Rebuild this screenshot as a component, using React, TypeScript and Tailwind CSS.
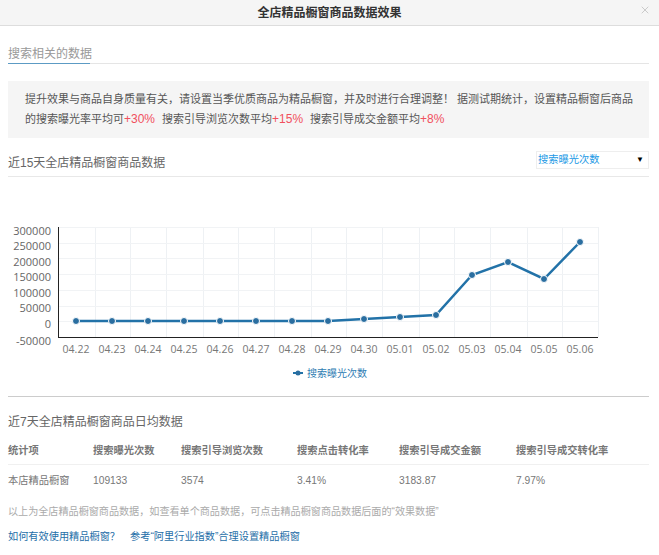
import { X } from "lucide-react";

const cjk = "font-['Liberation_Sans','Noto_Sans_CJK_SC',sans-serif]";

const xLabels = ["04.22", "04.23", "04.24", "04.25", "04.26", "04.27", "04.28", "04.29", "04.30", "05.01", "05.02", "05.03", "05.04", "05.05", "05.06"];
const yLabels = [
  { text: "300000", y: 231 },
  { text: "250000", y: 246 },
  { text: "200000", y: 262 },
  { text: "150000", y: 277 },
  { text: "100000", y: 293 },
  { text: "50000", y: 308 },
  { text: "0", y: 324 },
  { text: "-50000", y: 341 },
];
const points = [321, 321, 321, 321, 321, 321, 321, 321, 319, 317, 315, 275, 262, 279, 242].map((y, i) => ({ x: 76 + i * 36, y: y - 180 }));
const gridX = [95, 130, 166, 203, 238, 274, 311, 346, 382, 419, 454, 490, 527, 562, 598];
const gridY = [227, 243, 258, 274, 290, 306, 321];

const columns = "grid grid-cols-[85px_88px_116px_102px_117px_1fr]";
const headers = ["统计项", "搜索曝光次数", "搜索引导浏览次数", "搜索点击转化率", "搜索引导成交金额", "搜索引导成交转化率"];
const values = ["本店精品橱窗", "109133", "3574", "3.41%", "3183.87", "7.97%"];

function Chart() {
  return (
    <svg width="659" height="210" viewBox="0 0 659 210" className="block font-['Open_Sans',sans-serif]">
      {gridX.map((x) => (
        <line key={x} x1={x + 0.5} y1={47} x2={x + 0.5} y2={157} stroke="#eef1f4" />
      ))}
      {gridY.map((y) => (
        <line key={y} x1={58} y1={y - 179.5} x2={598} y2={y - 179.5} stroke="#f1f3f5" />
      ))}
      <line x1={58.5} y1={47} x2={58.5} y2={157} stroke="#222" />
      <line x1={58} y1={157.5} x2={598} y2={157.5} stroke="#222" />
      {yLabels.map((l) => (
        <text key={l.text} x={51} y={l.y - 180 + 4} textAnchor="end" fontSize="11" fill="#666">
          {l.text}
        </text>
      ))}
      {xLabels.map((l, i) => (
        <text key={l} x={76 + i * 36} y={173} textAnchor="middle" fontSize="10.5" fill="#777">
          {l}
        </text>
      ))}
      <polyline
        points={points.map((p) => `${p.x},${p.y}`).join(" ")}
        fill="none"
        stroke="#2272a8"
        strokeWidth="2.5"
      />
      {points.map((p) => (
        <circle key={p.x} cx={p.x} cy={p.y} r="3.5" fill="#2a6ea0" stroke="#fff" strokeWidth="1" />
      ))}
      <line x1={293} y1={193} x2={303} y2={193} stroke="#2272a8" strokeWidth="2" />
      <circle cx={298} cy={193} r="2.5" fill="#2a6ea0" />
    </svg>
  );
}

export default function App() {
  return (
    <div className={`${cjk} relative w-[659px] h-[555px] overflow-hidden bg-white text-[#666]`}>
      <div className="flex h-[26px] items-center justify-center border-b border-[#ddd] bg-[#f5f5f5] text-xs font-bold text-[#333]">
        全店精品橱窗商品数据效果
      </div>
      <button className="absolute right-[8px] top-[4px] text-[#bbb]">
        <X size={12} strokeWidth={1.5} />
      </button>

      <div className="pl-2 pr-[10px]">
        <div className="mt-[18px] flex border-b border-[#e5e5e5]">
          <span className="-mb-px h-5 w-[82px] whitespace-nowrap border-b border-[#5c9bc4] text-xs leading-[20px] text-[#999]">搜索相关的数据</span>
        </div>

        <div className="mt-[17px] h-[57px] bg-[#f5f5f5] px-[17px] py-2 text-[11px] leading-5 text-[#555]">
          <p className="whitespace-nowrap">提升效果与商品自身质量有关，请设置当季优质商品为精品橱窗，并及时进行合理调整！ 据测试期统计，设置精品橱窗后商品</p>
          <p className="whitespace-nowrap">
            的搜索曝光率平均可<span className="text-xs text-[#f1505e]">+30%</span>
            <span className="ml-[7px]">搜索引导浏览次数平均</span><span className="text-xs text-[#f1505e]">+15%</span>
            <span className="ml-[7px]">搜索引导成交金额平均</span><span className="text-xs text-[#f1505e]">+8%</span>
          </p>
        </div>

        <div className="mt-3 flex h-[27px] items-start justify-between border-b border-[#e8e8e8]">
          <span className="pt-[5px] text-xs text-[#666]">近15天全店精品橱窗商品数据</span>
          <div className="mt-px flex h-[18px] w-[113px] items-center justify-between border border-[#eee] pl-px pr-1 text-[10.25px] text-[#2299e5]">
            搜索曝光次数
            <span className="text-[8px] text-black">▼</span>
          </div>
        </div>
      </div>

      <div className="relative mt-[3px]">
        <Chart />
        <span className="absolute left-[307px] top-[188px] text-[10px] leading-3 text-[#2f7db3]">搜索曝光次数</span>
      </div>

      <div className="pl-2 pr-[10px]">
        <div className="mt-[6px] border-t border-[#ccc] pt-[17px] text-xs leading-4 text-[#666]">近7天全店精品橱窗商品日均数据</div>
        <div className={`${columns} mt-[13px] h-[22px] border-b border-[#f0f0f0] text-[10.25px] font-bold leading-4 text-[#777]`}>
          {headers.map((h) => (
            <span key={h}>{h}</span>
          ))}
        </div>
        <div className={`${columns} mt-2 h-4 text-[10.25px] leading-4 text-[#777]`}>
          {values.map((v) => (
            <span key={v}>{v}</span>
          ))}
        </div>
        <p className="mt-[15px] whitespace-nowrap text-[10.1px] leading-4 text-[#aaa]">以上为全店精品橱窗商品数据，如查看单个商品数据，可点击精品橱窗商品数据后面的“效果数据”</p>
        <p className="mt-[9px] flex gap-[10px] whitespace-nowrap text-[10.2px] leading-4 text-[#1f6fa8]">
          <span>如何有效使用精品橱窗？</span>
          <span>参考“阿里行业指数”合理设置精品橱窗</span>
        </p>
      </div>
    </div>
  );
}
